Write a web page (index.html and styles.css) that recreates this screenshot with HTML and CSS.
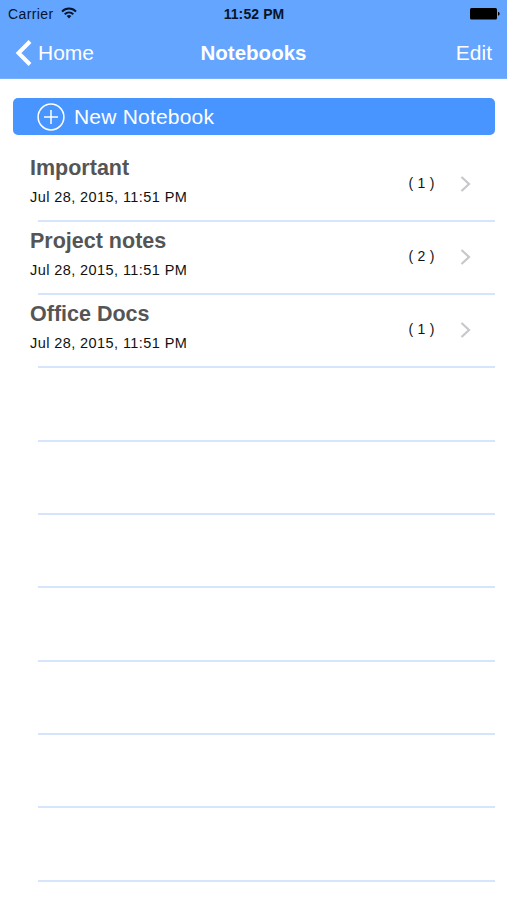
FILE: index.html
```html
<!DOCTYPE html>
<html lang="en">
<head>
  <meta charset="UTF-8" />
  <meta name="viewport" content="width=device-width, initial-scale=1.0"/>
  <title>Notebooks</title>
  <link rel="stylesheet" href="styles.css">
</head>
<body>

  <header class="header">
    <div class="status-bar">
      <div class="carrier">
        <span>Carrier</span>
        <svg class="wifi" width="16" height="12" viewBox="0 0 16 12" fill="none" stroke="#06152b" stroke-width="2">
          <path d="M1 4.6C5 .6 11 .6 15 4.6" />
          <path d="M3.7 7.3C6.2 5 9.8 5 12.3 7.3" />
          <path d="M5.7 9C7 7.8 9 7.8 10.3 9L8 11.4Z" fill="#06152b" stroke="none" />
        </svg>
      </div>
      <span class="time">11:52 PM</span>
      <svg class="battery" width="30" height="12" viewBox="0 0 30 12">
        <rect x="0" y="0" width="27" height="11.5" rx="1.5" fill="#000" />
        <path d="M28 3.8Q29.7 4.2 29.7 5.8T28 7.8Z" fill="#000" />
      </svg>
    </div>
    <nav class="nav-bar">
      <a class="back-link">
        <svg width="17" height="26" viewBox="0 0 17 26" fill="none" stroke="#fff" stroke-width="4">
          <path d="M15 1.5L3.5 13L15 24.5" />
        </svg>
        <span>Home</span>
      </a>
      <h1 class="title">Notebooks</h1>
      <a class="edit-link">Edit</a>
    </nav>
  </header>

  <main>
    <button type="button" class="new-btn">
      <svg width="28" height="28" viewBox="0 0 28 28" fill="none" stroke="#fff" stroke-width="1.5">
        <circle cx="14" cy="14" r="12.9" />
        <path d="M14 7V21M7 14H21" />
      </svg>
      <span>New Notebook</span>
    </button>

    <ul class="notebook-list">
      <li class="notebook">
        <div class="info">
          <h2>Important</h2>
          <p>Jul 28, 2015, 11:51 PM</p>
        </div>
        <span class="count">( 1 )</span>
        <svg class="chevron" width="11" height="16" viewBox="0 0 11 16"><path d="M1.5 1L9 8L1.5 15" /></svg>
      </li>
      <li class="notebook">
        <div class="info">
          <h2>Project notes</h2>
          <p>Jul 28, 2015, 11:51 PM</p>
        </div>
        <span class="count">( 2 )</span>
        <svg class="chevron" width="11" height="16" viewBox="0 0 11 16"><path d="M1.5 1L9 8L1.5 15" /></svg>
      </li>
      <li class="notebook">
        <div class="info">
          <h2>Office Docs</h2>
          <p>Jul 28, 2015, 11:51 PM</p>
        </div>
        <span class="count">( 1 )</span>
        <svg class="chevron" width="11" height="16" viewBox="0 0 11 16"><path d="M1.5 1L9 8L1.5 15" /></svg>
      </li>
      <li class="notebook"></li>
      <li class="notebook"></li>
      <li class="notebook"></li>
      <li class="notebook"></li>
      <li class="notebook"></li>
      <li class="notebook"></li>
      <li class="notebook"></li>
    </ul>
  </main>

</body>
</html>
```
FILE: styles.css
```css
* {
  box-sizing: border-box;
}

body {
  height: 900px;
  margin: 0;
  overflow: hidden;
  font-family: "Liberation Sans", Arial, sans-serif;
  background: #fff;
  color: #111;
}

h1, h2, p, ul {
  margin: 0;
  padding: 0;
}

.header {
  height: 79px;
  background: #64a5ff;
  border-bottom: 1px solid #7ab1fb;
}

.status-bar {
  display: grid;
  grid-template-columns: 1fr auto 1fr;
  align-items: center;
  height: 27px;
  padding: 0 7px 0 8px;
  font-size: 14px;
  color: #06152b;
}

.carrier {
  display: flex;
  align-items: center;
  gap: 7px;
  letter-spacing: 0.4px;
}

.wifi {
  margin-top: -2px;
}

.time {
  font-weight: bold;
  letter-spacing: 0.1px;
}

.battery {
  justify-self: end;
}

.nav-bar {
  display: grid;
  grid-template-columns: 1fr auto 1fr;
  align-items: center;
  height: 51px;
  padding: 0 15px;
  font-size: 21px;
  color: #fff;
}

.back-link {
  display: flex;
  align-items: center;
  gap: 6px;
}

.title {
  font-size: 20.5px;
}

.edit-link {
  justify-self: end;
}

.new-btn {
  display: flex;
  align-items: center;
  gap: 9px;
  width: 482px;
  height: 37px;
  margin: 19px 0 0 13px;
  padding: 1px 24px 0;
  background: #4895ff;
  color: #fff;
  border: none;
  border-radius: 5px;
  font-family: inherit;
  font-size: 21px;
  letter-spacing: 0.2px;
}

.notebook-list {
  margin: 13.6px 12px 0 30px;
  list-style: none;
}

.notebook {
  display: flex;
  height: 73.3px;
  padding-right: 24px;
  /* separator starts a little right of the text */
  background: linear-gradient(#d5e5fb, #d5e5fb) 8px 100% / 100% 2px no-repeat;
}

.info {
  flex: 1;
  padding-top: 7px;
}

.info h2 {
  font-size: 21.5px;
  line-height: 25px;
  color: #555;
}

.info p {
  margin-top: 7px;
  font-size: 14.5px;
  line-height: 18px;
  letter-spacing: 0.42px;
}

.count {
  margin-top: 25px;
  font-size: 14px;
  line-height: 18px;
  letter-spacing: 0.7px;
  word-spacing: -1px;
}

.chevron {
  margin: 27px 0 0 25px;
  fill: none;
  stroke: #c7c7cc;
  stroke-width: 2.2;
}
```
